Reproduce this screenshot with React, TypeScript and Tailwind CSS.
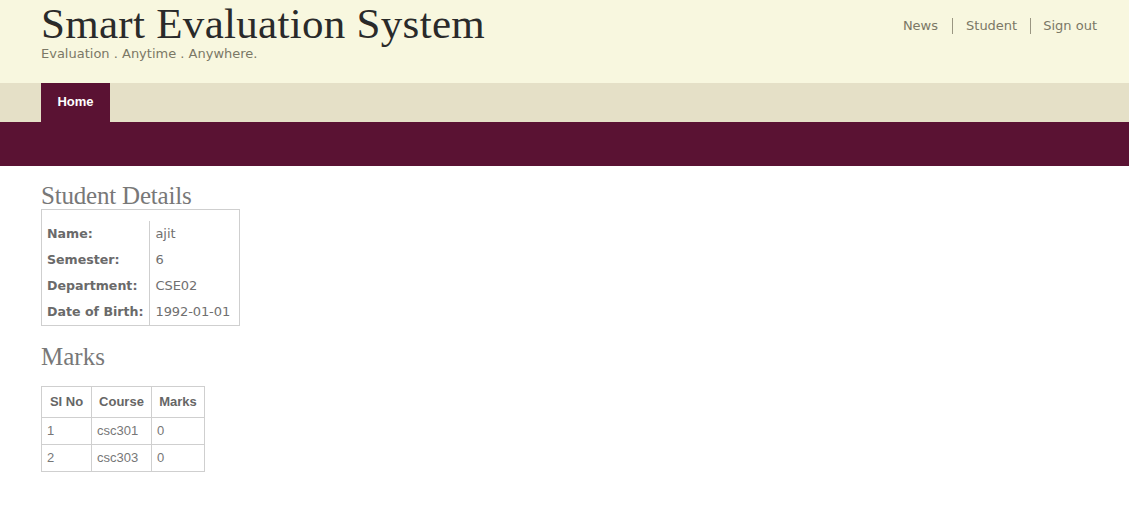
import React from "react";

const verdana = { fontFamily: '"DejaVu Sans", Verdana, sans-serif' };

export default function App() {
  return (
    <div className="min-h-[525px] bg-white" style={{ fontFamily: '"DejaVu Sans", Verdana, sans-serif' }}>
      <header className="h-[83px] bg-[#f8f7df] pl-[41px] pr-[32px] flex justify-between">
        <div>
          <h1 className="text-[43px] leading-none pt-[2px] text-[#2a2a2a] font-['Liberation_Serif',Georgia,serif] tracking-[0.3px]">
            Smart Evaluation System
          </h1>
          <p className="text-[13px] text-[#7b7866] -mt-[1px] tracking-[0px]">Evaluation . Anytime . Anywhere.</p>
        </div>
        <nav className="flex items-start pt-[18px] text-[13px] text-[#7b7866]">
          <a className="pr-[14px] border-r border-[#9a9682] leading-[16px]">News</a>
          <a className="px-[13px] border-r border-[#9a9682] leading-[16px]">Student</a>
          <a className="pl-[12px] leading-[16px]">Sign out</a>
        </nav>
      </header>
      <div className="h-[39px] bg-[#e5e0c7] pl-[41px] flex">
        <div className="w-[69px] h-[39px] bg-[#5a1233] text-white text-[13px] font-bold flex items-center justify-center pb-[1px] font-['Liberation_Sans',Arial,sans-serif]">
          Home
        </div>
      </div>
      <div className="h-[44px] bg-[#5a1233]" />

      <main className="pl-[41px] pt-[16px]">
        <h2 className="text-[25px] leading-[27px] text-[#787878] font-['Liberation_Serif',Georgia,serif] tracking-[-0.2px]">Student Details</h2>
        <div className="w-[199px] border border-[#cfcfcf] pt-[11px]" style={verdana}>
          <table className="text-[13px] text-[#6c6c6c] border-collapse whitespace-nowrap">
            <tbody>
              {[
                ["Name:", "ajit"],
                ["Semester:", "6"],
                ["Department:", "CSE02"],
                ["Date of Birth:", "1992-01-01"],
              ].map(([k, v]) => (
                <tr key={k} className="h-[26px]">
                  <td className="font-bold pl-[5px] pr-[2px] border-r border-[#cfcfcf] text-[#6a6a6a] w-[107px] text-[12.6px]">{k}</td>
                  <td className="pl-[6px] pr-[4px] text-[#707070] tracking-[-0.1px]">{v}</td>
                </tr>
              ))}
            </tbody>
          </table>
        </div>

        <h2 className="mt-[17px] text-[25px] leading-[28px] text-[#787878] font-['Liberation_Serif',Georgia,serif]">Marks</h2>
        <table className="mt-[15px] border-collapse text-[13px] text-[#777] font-['Liberation_Sans',Arial,sans-serif]">
          <thead>
            <tr className="h-[31px]">
              <th className="border border-[#cfcfcf] w-[50px] font-bold text-[#666] text-center">SI No</th>
              <th className="border border-[#cfcfcf] w-[60px] font-bold text-[#666] text-center">Course</th>
              <th className="border border-[#cfcfcf] w-[53px] font-bold text-[#666] text-center">Marks</th>
            </tr>
          </thead>
          <tbody>
            {[
              ["1", "csc301", "0"],
              ["2", "csc303", "0"],
            ].map((r) => (
              <tr key={r[0]} className="h-[27px]">
                {r.map((c, i) => (
                  <td key={i} className="border border-[#cfcfcf] pl-[5px] text-left font-normal">{c}</td>
                ))}
              </tr>
            ))}
          </tbody>
        </table>
      </main>
    </div>
  );
}
